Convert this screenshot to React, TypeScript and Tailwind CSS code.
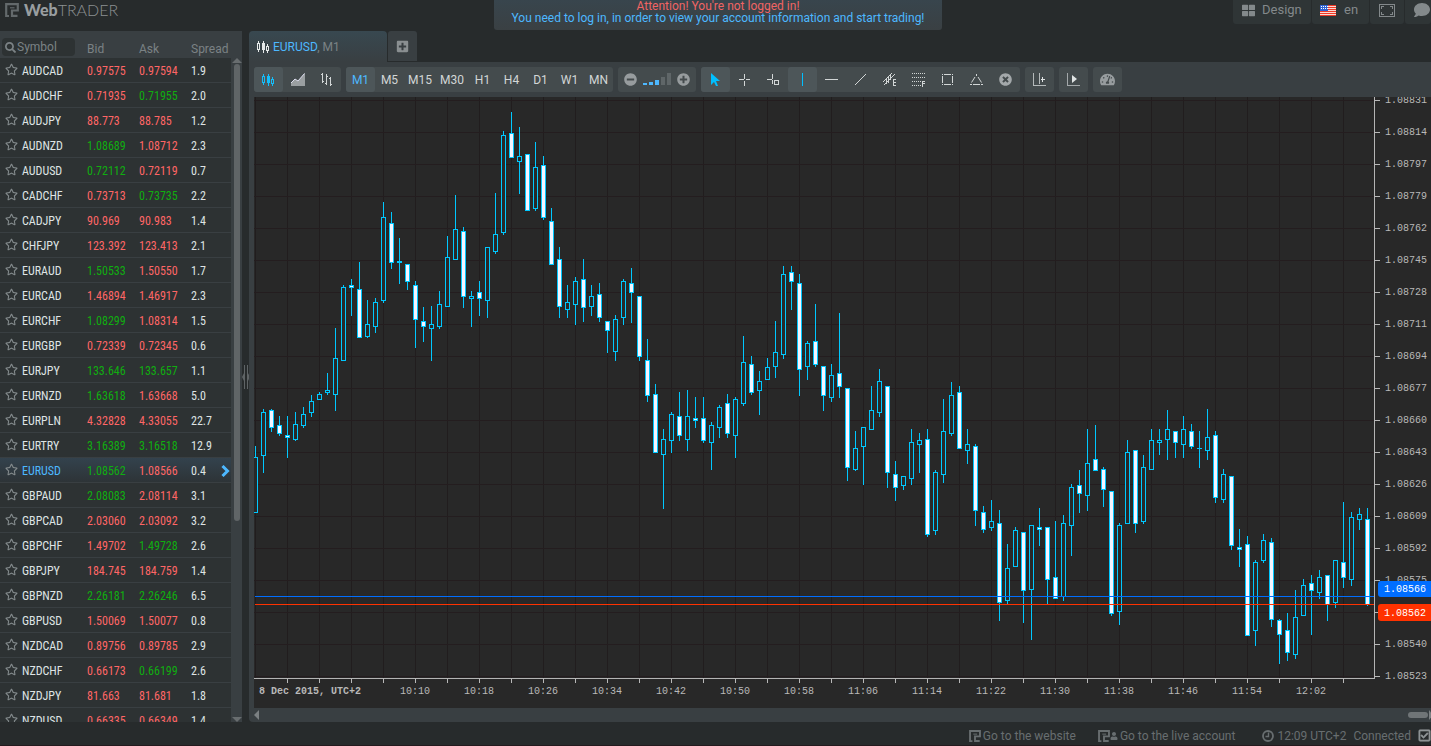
import React, { useState } from "react";
import {
  FaComment,
  FaMinusCircle,
  FaPlusCircle,
  FaPlusSquare,
  FaRegCheckSquare,
  FaRegStar,
  FaSearch,
  FaTachometerAlt,
  FaThLarge,
  FaTimesCircle,
  FaUser,
} from "react-icons/fa";

type Quote = [symbol: string, bid: string, ask: string, spread: string, dir: string];

// dir: u = up (green), d = down (red), first letter for bid, second for ask
const QUOTES: Quote[] = [
  ["AUDCAD", "0.97575", "0.97594", "1.9", "dd"],
  ["AUDCHF", "0.71935", "0.71955", "2.0", "du"],
  ["AUDJPY", "88.773", "88.785", "1.2", "dd"],
  ["AUDNZD", "1.08689", "1.08712", "2.3", "ud"],
  ["AUDUSD", "0.72112", "0.72119", "0.7", "ud"],
  ["CADCHF", "0.73713", "0.73735", "2.2", "du"],
  ["CADJPY", "90.969", "90.983", "1.4", "dd"],
  ["CHFJPY", "123.392", "123.413", "2.1", "dd"],
  ["EURAUD", "1.50533", "1.50550", "1.7", "ud"],
  ["EURCAD", "1.46894", "1.46917", "2.3", "dd"],
  ["EURCHF", "1.08299", "1.08314", "1.5", "ud"],
  ["EURGBP", "0.72339", "0.72345", "0.6", "dd"],
  ["EURJPY", "133.646", "133.657", "1.1", "uu"],
  ["EURNZD", "1.63618", "1.63668", "5.0", "ud"],
  ["EURPLN", "4.32828", "4.33055", "22.7", "dd"],
  ["EURTRY", "3.16389", "3.16518", "12.9", "uu"],
  ["EURUSD", "1.08562", "1.08566", "0.4", "ud"],
  ["GBPAUD", "2.08083", "2.08114", "3.1", "ud"],
  ["GBPCAD", "2.03060", "2.03092", "3.2", "dd"],
  ["GBPCHF", "1.49702", "1.49728", "2.6", "du"],
  ["GBPJPY", "184.745", "184.759", "1.4", "dd"],
  ["GBPNZD", "2.26181", "2.26246", "6.5", "uu"],
  ["GBPUSD", "1.50069", "1.50077", "0.8", "dd"],
  ["NZDCAD", "0.89756", "0.89785", "2.9", "dd"],
  ["NZDCHF", "0.66173", "0.66199", "2.6", "du"],
  ["NZDJPY", "81.663", "81.681", "1.8", "dd"],
  ["NZDUSD", "0.66335", "0.66349", "1.4", "dd"],
];

// high, body top, body bottom, low, filled
type Candle = [number, number, number, number, number];

const CANDLES: Candle[] = [
  [446, 457, 513, 513, 0], [409, 412, 456, 473, 0], [409, 410, 428, 432, 1], [416, 425, 434, 436, 1],
  [416, 435, 438, 458, 1], [412, 424, 440, 441, 0], [407, 414, 426, 428, 0], [395, 401, 413, 417, 0],
  [392, 394, 400, 400, 0], [373, 390, 393, 395, 0], [328, 358, 395, 411, 0], [285, 287, 361, 361, 0],
  [279, 285, 288, 316, 1], [262, 289, 338, 338, 1], [300, 324, 337, 338, 0], [298, 302, 327, 333, 0],
  [202, 217, 301, 303, 0], [212, 223, 263, 269, 1], [238, 261, 263, 284, 0], [264, 264, 282, 290, 1],
  [281, 285, 320, 348, 1], [307, 321, 327, 342, 1], [306, 324, 329, 361, 0], [291, 304, 327, 329, 0],
  [236, 257, 307, 307, 0], [195, 229, 260, 260, 0], [227, 231, 297, 308, 1], [291, 296, 299, 327, 0],
  [281, 292, 299, 316, 1], [247, 247, 301, 318, 0], [193, 234, 252, 254, 0], [131, 135, 233, 235, 0],
  [112, 133, 158, 158, 1], [127, 156, 162, 194, 0], [154, 154, 211, 211, 1], [142, 167, 209, 211, 0],
  [156, 165, 218, 220, 1], [208, 221, 265, 265, 1], [247, 259, 307, 318, 1], [285, 302, 310, 318, 0],
  [277, 281, 305, 325, 0], [259, 279, 308, 322, 1], [285, 296, 307, 316, 0], [283, 294, 318, 322, 1],
  [321, 321, 331, 353, 1], [315, 319, 352, 361, 0], [279, 281, 318, 325, 0], [268, 283, 293, 323, 1],
  [296, 296, 357, 361, 1], [339, 360, 396, 402, 1], [384, 394, 453, 453, 1], [429, 439, 455, 509, 0],
  [412, 414, 441, 453, 0], [392, 416, 436, 441, 1], [390, 416, 440, 451, 0], [397, 418, 421, 428, 1],
  [397, 418, 441, 443, 1], [422, 425, 443, 470, 0], [405, 407, 428, 438, 0], [394, 403, 434, 438, 1],
  [397, 399, 436, 458, 0], [336, 362, 404, 406, 0], [356, 364, 393, 395, 1], [371, 381, 391, 415, 0],
  [358, 367, 380, 380, 0], [321, 352, 367, 378, 0], [266, 274, 355, 359, 0], [266, 272, 282, 310, 1],
  [274, 283, 370, 396, 1], [341, 343, 367, 380, 0], [304, 341, 365, 367, 1], [366, 366, 396, 411, 1],
  [364, 375, 398, 402, 0], [313, 373, 387, 398, 1], [388, 388, 468, 481, 1], [431, 448, 470, 471, 0],
  [427, 427, 447, 485, 0], [386, 410, 430, 430, 0], [369, 381, 413, 417, 0], [386, 386, 473, 488, 1],
  [461, 474, 488, 501, 1], [476, 476, 486, 490, 0], [429, 442, 479, 485, 0], [433, 440, 445, 473, 0],
  [429, 439, 535, 537, 1], [470, 472, 531, 535, 0], [399, 431, 475, 483, 0], [382, 395, 434, 436, 0],
  [386, 392, 449, 449, 1], [429, 444, 451, 464, 0], [444, 446, 511, 526, 1], [506, 512, 530, 533, 1],
  [500, 521, 528, 531, 0], [510, 523, 603, 621, 1], [544, 568, 601, 604, 0], [527, 530, 567, 567, 0],
  [532, 532, 591, 623, 1], [525, 525, 590, 640, 0], [508, 527, 530, 546, 1], [527, 527, 580, 605, 1],
  [521, 577, 599, 599, 1], [515, 523, 597, 601, 0], [484, 487, 526, 556, 0], [470, 485, 494, 513, 1],
  [429, 463, 496, 511, 0], [425, 459, 471, 471, 1], [467, 469, 490, 507, 1], [491, 491, 614, 616, 1],
  [523, 525, 612, 625, 0], [440, 452, 524, 524, 0], [450, 450, 524, 533, 1], [455, 467, 522, 524, 0],
  [429, 440, 470, 470, 0], [429, 440, 443, 455, 0], [410, 429, 440, 460, 0], [431, 431, 443, 458, 1],
  [416, 429, 445, 458, 0], [424, 431, 447, 449, 1], [431, 448, 449, 468, 0], [409, 437, 451, 460, 0],
  [431, 435, 498, 503, 1], [469, 474, 500, 503, 0], [476, 476, 546, 550, 1], [529, 547, 550, 567, 1],
  [536, 544, 636, 636, 1], [560, 562, 631, 646, 0], [534, 540, 561, 563, 0], [538, 542, 620, 627, 1],
  [619, 620, 635, 664, 1], [613, 630, 653, 661, 1], [590, 617, 655, 659, 0], [579, 585, 616, 616, 0],
  [575, 583, 591, 635, 1], [570, 577, 593, 599, 0], [575, 575, 605, 621, 1], [560, 560, 603, 608, 0],
  [502, 562, 578, 588, 1], [512, 517, 580, 586, 0], [508, 514, 520, 530, 0], [508, 519, 605, 606, 1],
];

const PRICES = [
  "1.08831", "1.08814", "1.08797", "1.08779", "1.08762", "1.08745", "1.08728", "1.08711", "1.08694",
  "1.08677", "1.08660", "1.08643", "1.08626", "1.08609", "1.08592", "1.08575", "", "1.08540", "1.08523",
];

const TIMES = [
  "10:10", "10:18", "10:26", "10:34", "10:42", "10:50", "10:58", "11:06",
  "11:14", "11:22", "11:30", "11:38", "11:46", "11:54", "12:02",
];

const TIMEFRAMES = ["M1", "M5", "M15", "M30", "H1", "H4", "D1", "W1", "MN"];

const TOP = 97; // candle rows are stored in page rows
const PLOT_W = 1120;
const PLOT_H = 581;

const Chart: React.FC = () => (
  <svg
    className="block h-full w-full bg-[#282828]"
    shapeRendering="crispEdges"
    role="img"
    aria-label="EURUSD, M1"
  >
    {Array.from({ length: 35 }, (_, i) => (
      <rect key={i} x={1 + i * 32} y={0} width={1} height={PLOT_H} fill="#211d1e" />
    ))}
    {PRICES.map((_, i) => (
      <rect key={i} x={0} y={3 + i * 32} width={PLOT_W} height={1} fill="#241d1f" />
    ))}

    {CANDLES.map(([high, top, bottom, low, filled], i) => {
      const x = 1 + i * 8;
      const h = bottom - top;
      return (
        <g key={i}>
          <rect x={x} y={high - TOP} width={1} height={low - high} fill="#00c8ff" />
          <rect x={x - 2} y={top - TOP} width={5} height={h} fill="#00c8ff" />
          {h > 2 && (
            <rect
              x={x - 1}
              y={top - TOP + 1}
              width={3}
              height={h - 2}
              fill={filled ? "#f4f4ff" : "#282828"}
            />
          )}
        </g>
      );
    })}

    <rect x={1} y={499} width={PLOT_W} height={1} fill="#006eff" />
    <rect x={1} y={507} width={PLOT_W} height={1} fill="#ff3200" />

    {/* axes */}
    <rect x={0} y={PLOT_H} width={PLOT_W + 1} height={1} fill="#b4b4b4" />
    <rect x={PLOT_W} y={0} width={1} height={PLOT_H + 1} fill="#b4b4b4" />

    <g fill="#b8b8b8" fontFamily='"Liberation Mono", monospace' fontSize={10}>
      {PRICES.map((price, i) => (
        <g key={i}>
          <rect x={PLOT_W} y={3 + i * 32} width={6} height={1} />
          <text x={1131} y={6 + i * 32}>{price}</text>
        </g>
      ))}
      {Array.from({ length: 34 }, (_, i) => (
        <rect key={i} x={33 + i * 32} y={PLOT_H} width={1} height={5} />
      ))}
      {TIMES.map((time, i) => (
        <text key={time} x={161 + i * 64} y={597} textAnchor="middle">{time}</text>
      ))}
      <text x={5} y={597} fontWeight="bold">8 Dec 2015, UTC+2</text>
    </g>

    <g fontFamily='"Liberation Mono", monospace' fontSize={10} fill="#fff" shapeRendering="auto">
      <rect x={1124} y={484} width={60} height={16} rx={3} fill="#006eff" />
      <text x={1130} y={495}>1.08566</text>
      <rect x={1124} y={507} width={60} height={17} rx={3} fill="#ff3200" />
      <text x={1130} y={519}>1.08562</text>
    </g>
  </svg>
);

const LogoMark: React.FC<{ size: number }> = ({ size }) => (
  <svg width={size} height={size} viewBox="0 0 14 14" fill="none" stroke="currentColor">
    <path d="M4 13H1.200V1.200H12.800V7.500H7V12.800H12.500" strokeWidth="2.200" />
    <path d="M5 4.800H9.500" strokeWidth="1.200" />
  </svg>
);

const CandlesIcon: React.FC = () => (
  <svg width="13" height="14" viewBox="0 0 13 14" fill="currentColor" shapeRendering="crispEdges">
    <path d="M1 1h1v2h1v7h-1v2h-1v-2h-1v-7h1zM1 4v5h1v-5z" fillRule="evenodd" />
    <path d="M6 1h1v2h1v7h-1v3h-1v-3h-1v-7h1z" />
    <path d="M10 4h1v2h1v5h-1v2h-1v-2h-1v-5h1zM10 7v3h1v-3z" fillRule="evenodd" />
  </svg>
);

const TOOL_ICONS: Record<string, React.ReactNode> = {
  Cursor: <path d="M2 0v12l3-3 2 4h2l-2-5h4z" fill="currentColor" />,
  Crosshair: (
    <path d="M6.5 1v5M6.5 8v5M1 6.5h5M8 6.5h4" stroke="currentColor" shapeRendering="crispEdges" />
  ),
  "Data window": (
    <path d="M5.5 1v5M5.5 7v4M0 6.5h5M7.5 7.5h4v4h-4z" stroke="currentColor" fill="none" shapeRendering="crispEdges" />
  ),
  "Vertical line": <path d="M6.5 0v13" stroke="currentColor" shapeRendering="crispEdges" />,
  "Horizontal line": <path d="M0 6.5h13" stroke="currentColor" shapeRendering="crispEdges" />,
  "Trend line": <path d="M1 12L12 1" stroke="currentColor" />,
  Channel: (
    <>
      <path d="M0 9L9 0M1 12L12 1M3.5 6v5M5.5 4v6M7.5 2v5" stroke="currentColor" />
      <path d="M13 6.5h-2.500v6h2.500M11 9.500h2" stroke="currentColor" fill="none" shapeRendering="crispEdges" />
    </>
  ),
  Fibonacci: (
    <>
      <path
        d="M0 .5h13M0 4.5h13M0 8.5h9M0 12.5h9"
        stroke="currentColor"
        strokeDasharray="1 1"
        shapeRendering="crispEdges"
      />
      <path d="M13 8.5h-2.500v5M11 10.500h2" stroke="currentColor" fill="none" shapeRendering="crispEdges" />
    </>
  ),
  Rectangle: (
    <>
      <path d="M3 1.5h7M3 11.5h7M1.5 3v7M11.5 3v7" stroke="currentColor" shapeRendering="crispEdges" />
      <path d="M1 1h1v1H1zM11 1h1v1h-1zM1 11h1v1H1zM11 11h1v1h-1z" fill="currentColor" />
    </>
  ),
  Triangle: (
    <>
      <path d="M5 4L1.500 9.500M8 4L11.500 9.500M3 11.500h7" stroke="currentColor" fill="none" />
      <path d="M6 1h1v2H6zM0 11h2v1H0zM11 11h2v1h-2z" fill="currentColor" />
    </>
  ),
};

const group = "flex h-[25px] items-stretch rounded-[3px] bg-[#444b4d]";
const toolBtn = "flex w-[29px] cursor-pointer items-center justify-center rounded-[3px]";
const topBtn =
  "flex h-6 cursor-pointer items-center rounded-b-[3px] bg-[#2f3536] text-[13px] text-[#83898b]";

const Toolbar: React.FC = () => {
  const [frame, setFrame] = useState("M1");
  const [tool, setTool] = useState("Cursor");

  return (
    <div className="flex h-[35px] shrink-0 items-center gap-[5px] bg-[#393f42] pl-[5px] text-[#d2d6d6]">
      <div className={group}>
        <button aria-label="Candlesticks" className={`${toolBtn} bg-[#4d5659] text-[#14bdfa]`}>
          <CandlesIcon />
        </button>
        <button aria-label="Area" className={toolBtn}>
          <svg width="14" height="13" viewBox="0 0 14 13">
            <path d="M0 13V10L4 6L7 8L14 0V13z" fill="#9a9fa1" />
            <path d="M0 10L4 6L7 8L13.500 .5" stroke="#dde" fill="none" />
          </svg>
        </button>
        <button aria-label="Bars" className={toolBtn}>
          <svg width="13" height="13" viewBox="0 0 13 13" stroke="currentColor" shapeRendering="crispEdges">
            <path d="M2.5 0v10M1 1.5h1M3 8.5h1M6.5 1v11M5 10.5h1M7 3.5h1M10.5 4v9M9 5.5h1M11 11.5h1" />
          </svg>
        </button>
      </div>

      <div className={`${group} text-xs`}>
        {TIMEFRAMES.map((f) => (
          <button
            key={f}
            onClick={() => setFrame(f)}
            className={`cursor-pointer rounded-[3px] ${f.length > 2 ? "w-8" : "w-[29px]"} ${
              f === frame ? "bg-[#4d5659] text-[#4db8ff]" : ""
            }`}
          >
            {f}
          </button>
        ))}
      </div>

      <div className={`${group} w-[78px] justify-between px-[6px] text-[#979c9e]`}>
        <button aria-label="Zoom out" className="cursor-pointer">
          <FaMinusCircle size={13} />
        </button>
        <svg className="self-center" width="28" height="13" viewBox="0 0 28 13" aria-hidden="true">
          <path d="M0 10h4v2H0zM6 9h4v3H6zM12 7h4v5h-4z" fill="#4db8ff" />
          <path d="M18 4h4v8h-4zM24 0h4v12h-4z" fill="#5f6668" />
        </svg>
        <button aria-label="Zoom in" className="cursor-pointer">
          <FaPlusCircle size={13} />
        </button>
      </div>

      <div className={group}>
        {Object.entries(TOOL_ICONS).map(([name, icon]) => (
          <button
            key={name}
            aria-label={name}
            onClick={() => setTool(name)}
            className={`${toolBtn} ${
              name === tool || name === "Vertical line" ? "bg-[#4d5659] text-[#00bfff]" : ""
            }`}
          >
            <svg width="13" height="13" viewBox="0 0 13 13" className="overflow-visible">
              {icon}
            </svg>
          </button>
        ))}
        <button aria-label="Delete all" className={`${toolBtn} text-[#a3a8aa]`}>
          <FaTimesCircle size={13} />
        </button>
      </div>

      <button aria-label="Chart shift" className={`${toolBtn} h-[25px] bg-[#444b4d]`}>
        <svg width="13" height="13" viewBox="0 0 13 13" stroke="#b4b9ba" shapeRendering="crispEdges">
          <path d="M.5 0v12M0 12.500h13M6.500 0v11" />
          <path d="M8 6.500h4M9.500 4v5" stroke="#e0e4e4" />
        </svg>
      </button>
      <button aria-label="Auto scroll" className={`${toolBtn} h-[25px] bg-[#444b4d]`}>
        <svg width="13" height="13" viewBox="0 0 13 13">
          <path d="M.5 0v12.500H13" stroke="#a3a8aa" fill="none" shapeRendering="crispEdges" />
          <path d="M5 2v8l5-4z" fill="#e0e4e4" />
        </svg>
      </button>
      <button aria-label="Indicators" className={`${toolBtn} h-[25px] bg-[#444b4d] text-[#979c9e]`}>
        <FaTachometerAlt size={15} />
      </button>
    </div>
  );
};

const Sidebar: React.FC = () => {
  const [selected, setSelected] = useState("EURUSD");

  return (
    <aside className="flex w-[242px] shrink-0 overflow-hidden bg-[#393f42]">
      <div className="min-w-0 flex-1 overflow-hidden">
        <table className="w-full table-fixed border-separate border-spacing-0 text-left">
          <thead className="text-xs text-[#7b8285]">
            <tr className="h-[27px]">
              <th className="w-[87px] p-0 pl-[2px] align-bottom font-normal">
                <label className="mb-[2px] flex h-[18px] w-[73px] items-center gap-[1px] rounded bg-[#2d3233] pl-[3px]">
                  <FaSearch size={11} className="shrink-0" />
                  <input
                    type="text"
                    aria-label="Symbol"
                    placeholder="Symbol"
                    className="w-full min-w-0 placeholder:text-[#7b8285] focus:outline-none"
                  />
                </label>
              </th>
              <th className="w-[52px] p-0 pt-2 font-normal">Bid</th>
              <th className="w-[52px] p-0 pt-2 font-normal">Ask</th>
              <th className="p-0 pt-2 font-normal">Spread</th>
            </tr>
          </thead>
          <tbody className="font-['Roboto_Condensed',Roboto,sans-serif] text-xs text-[#dfe4e4]">
            {QUOTES.map(([symbol, bid, ask, spread, dir]) => {
              const active = symbol === selected;
              return (
                <tr
                  key={symbol}
                  onClick={() => setSelected(symbol)}
                  className={`cursor-pointer *:h-[25px] *:border-b *:border-[#393f42] *:p-0 *:pt-[2px] ${
                    active ? "bg-linear-to-b from-[#33424d] to-[#2d3336]" : "bg-[#2d3233]"
                  }`}
                >
                  <td>
                    <span className="flex items-center gap-1 pl-[5px]">
                      <FaRegStar size={13} className="mb-[3px] shrink-0 text-[#838a8c]" />
                      <span className={active ? "text-[#4db8ff]" : ""}>{symbol}</span>
                    </span>
                  </td>
                  <td className={dir[0] === "u" ? "text-[#10ad10]" : "text-[#ff6666]"}>{bid}</td>
                  <td className={dir[1] === "u" ? "text-[#10ad10]" : "text-[#ff6666]"}>{ask}</td>
                  <td>
                    <span className="flex items-center justify-between pr-[1px]">
                      {spread}
                      {active && (
                        <svg width="9" height="12" viewBox="0 0 9 12" fill="none" stroke="#4db8ff" strokeWidth="3">
                          <path d="M1.500 1l5 5l-5 5" />
                        </svg>
                      )}
                    </span>
                  </td>
                </tr>
              );
            })}
          </tbody>
        </table>
      </div>

      <div className="flex w-[11px] shrink-0 flex-col items-center pt-[27px] text-[#686d6f]">
        <svg width="10" height="5" viewBox="0 0 10 5" fill="currentColor"><path d="M5 0l5 5H0z" /></svg>
        <div className="min-h-0 w-full flex-1 px-[3px] pt-[1px]">
          <div className="h-[70%] w-[6px] rounded-full bg-[#606567]" />
        </div>
        <svg width="10" height="5" viewBox="0 0 10 5" fill="currentColor"><path d="M0 0h10L5 5z" /></svg>
      </div>
    </aside>
  );
};

const App: React.FC = () => {
  return (
    <div className="flex h-screen flex-col overflow-hidden bg-[#272b2c] font-[Roboto,sans-serif] text-xs">
      <header className="flex h-[31px] shrink-0 items-start">
        <h1 className="flex flex-1 items-center gap-[5px] pt-[2px] pl-[5px] text-[#63696b]">
          <LogoMark size={14} />
          <span className="font-[Lato,sans-serif] text-base leading-4">
            <b className="font-black text-[#999ea0]">Web</b>
            <span className="font-light text-[#8b9092]">TRADER</span>
          </span>
        </h1>

        <div className="flex h-[30px] w-[448px] flex-col items-center rounded-b-[3px] bg-linear-to-b from-[#38454d] to-[#3a4043] leading-3">
          <p className="text-[#f06464]">Attention! You're not logged in!</p>
          <p className="text-[#4db8ff]">
            You need to log in, in order to view your account information and start trading!
          </p>
        </div>

        <nav className="flex flex-1 justify-end gap-[1px] overflow-hidden">
          <button className={`${topBtn} w-[78px] gap-[7px] pb-1 pl-[9px]`}>
            <FaThLarge size={13} />
            Design
          </button>
          <button className={`${topBtn} w-[57px] gap-2 pb-1 pl-2`}>
            <svg width="16" height="11" viewBox="0 0 16 11" className="shrink-0" aria-hidden="true">
              <path d="M0 0h16v11H0z" fill="#f9d9d2" />
              <path
                d="M0 .5h16M0 2.5h16M0 4.5h16M0 6.5h16M0 8.5h16M0 10.5h16"
                stroke="#f03a28"
                shapeRendering="crispEdges"
              />
              <path d="M0 0h8v6H0z" fill="#2f62d0" />
              <path d="M1 1.500h7M1 3.500h7" stroke="#fff" strokeDasharray="1 1" />
            </svg>
            en
          </button>
          <button aria-label="Full screen" className={`${topBtn} w-[34px] justify-center pb-1`}>
            <svg width="16" height="13" viewBox="0 0 16 13" fill="none" stroke="currentColor" shapeRendering="crispEdges">
              <path d="M.5 .5h15v12H.5z" />
              <path d="M2.5 5V2.5H5M11 2.5h2.500V5M2.5 8v2.500H5M11 10.500h2.500V8" />
            </svg>
          </button>
          <button aria-label="Chat" className={`${topBtn} w-[26px] justify-end pr-[1px] pb-1`}>
            <FaComment size={16} />
          </button>
        </nav>
      </header>

      <main className="flex min-h-0 flex-1">
        <Sidebar />

        <div className="flex w-[7px] shrink-0 items-center justify-center">
          <svg width="8" height="24" viewBox="0 0 8 24" fill="#5f6466" className="shrink-0">
            <path d="M2 0h1v24H2zM5 0h1v24H5zM2 8v8L0 12zM6 8v8l2-4z" />
          </svg>
        </div>

        <section className="flex min-w-0 flex-1 flex-col overflow-hidden rounded-bl-[4px] bg-[#393f42]">
          <div className="flex h-[31px] shrink-0 gap-[1px] bg-[#272b2c]">
            <button className="flex w-[138px] cursor-pointer items-center gap-[3px] rounded-t-[4px] bg-linear-to-b from-[#384850] to-[#393f42] pl-2 text-[#e6eaea]">
              <CandlesIcon />
              <span className="text-[#7b8285]">
                <span className="text-[#4db8ff]">EURUSD</span>, M1
              </span>
            </button>
            <button
              aria-label="New chart"
              className="flex h-[30px] w-[29px] cursor-pointer items-center justify-center rounded-t-[3px] bg-[#393f42] text-[#8a8f91]"
            >
              <FaPlusSquare size={13} />
            </button>
          </div>

          <Toolbar />

          <div className="min-h-0 flex-1 pl-[5px]">
            <Chart />
          </div>

          <div className="flex h-[14px] shrink-0 items-center pl-[5px] text-[#7b8082]">
            <svg width="5" height="10" viewBox="0 0 5 10" fill="currentColor"><path d="M5 0v10L0 5z" /></svg>
            <div className="flex flex-1 justify-end">
              <div className="h-[6px] w-5 rounded-full bg-[#707577]" />
            </div>
            <svg width="3" height="10" viewBox="0 0 3 10" fill="currentColor"><path d="M1 0v10l4-5z" /></svg>
          </div>
        </section>
      </main>

      <footer className="flex h-6 shrink-0 items-center justify-end border-b border-[#241a1e] pt-[4px] text-[#686e70]">
        <a href="#website" className="mr-[22px] flex items-center gap-[2px]">
          <LogoMark size={12} />
          Go to the website
        </a>
        <a href="#live" className="mr-[27px] flex items-center gap-[2px]">
          <span className="flex items-center">
            <LogoMark size={12} />
            <FaUser size={8} />
          </span>
          Go to the live account
        </a>
        <span className="mr-[7px] flex items-center gap-[3px]">
          <svg width="12" height="12" viewBox="0 0 12 12" fill="none" stroke="currentColor">
            <circle cx="6" cy="6" r="5" strokeWidth="1.800" />
            <path d="M6.500 2.500V6.500H3.500" strokeWidth="1.400" />
          </svg>
          12:09 UTC+2
        </span>
        <span className="flex items-center gap-[7px]">
          Connected
          <FaRegCheckSquare size={13} stroke="currentColor" strokeWidth={24} className="text-[#8f9496]" />
        </span>
      </footer>
    </div>
  );
};

export default App;
